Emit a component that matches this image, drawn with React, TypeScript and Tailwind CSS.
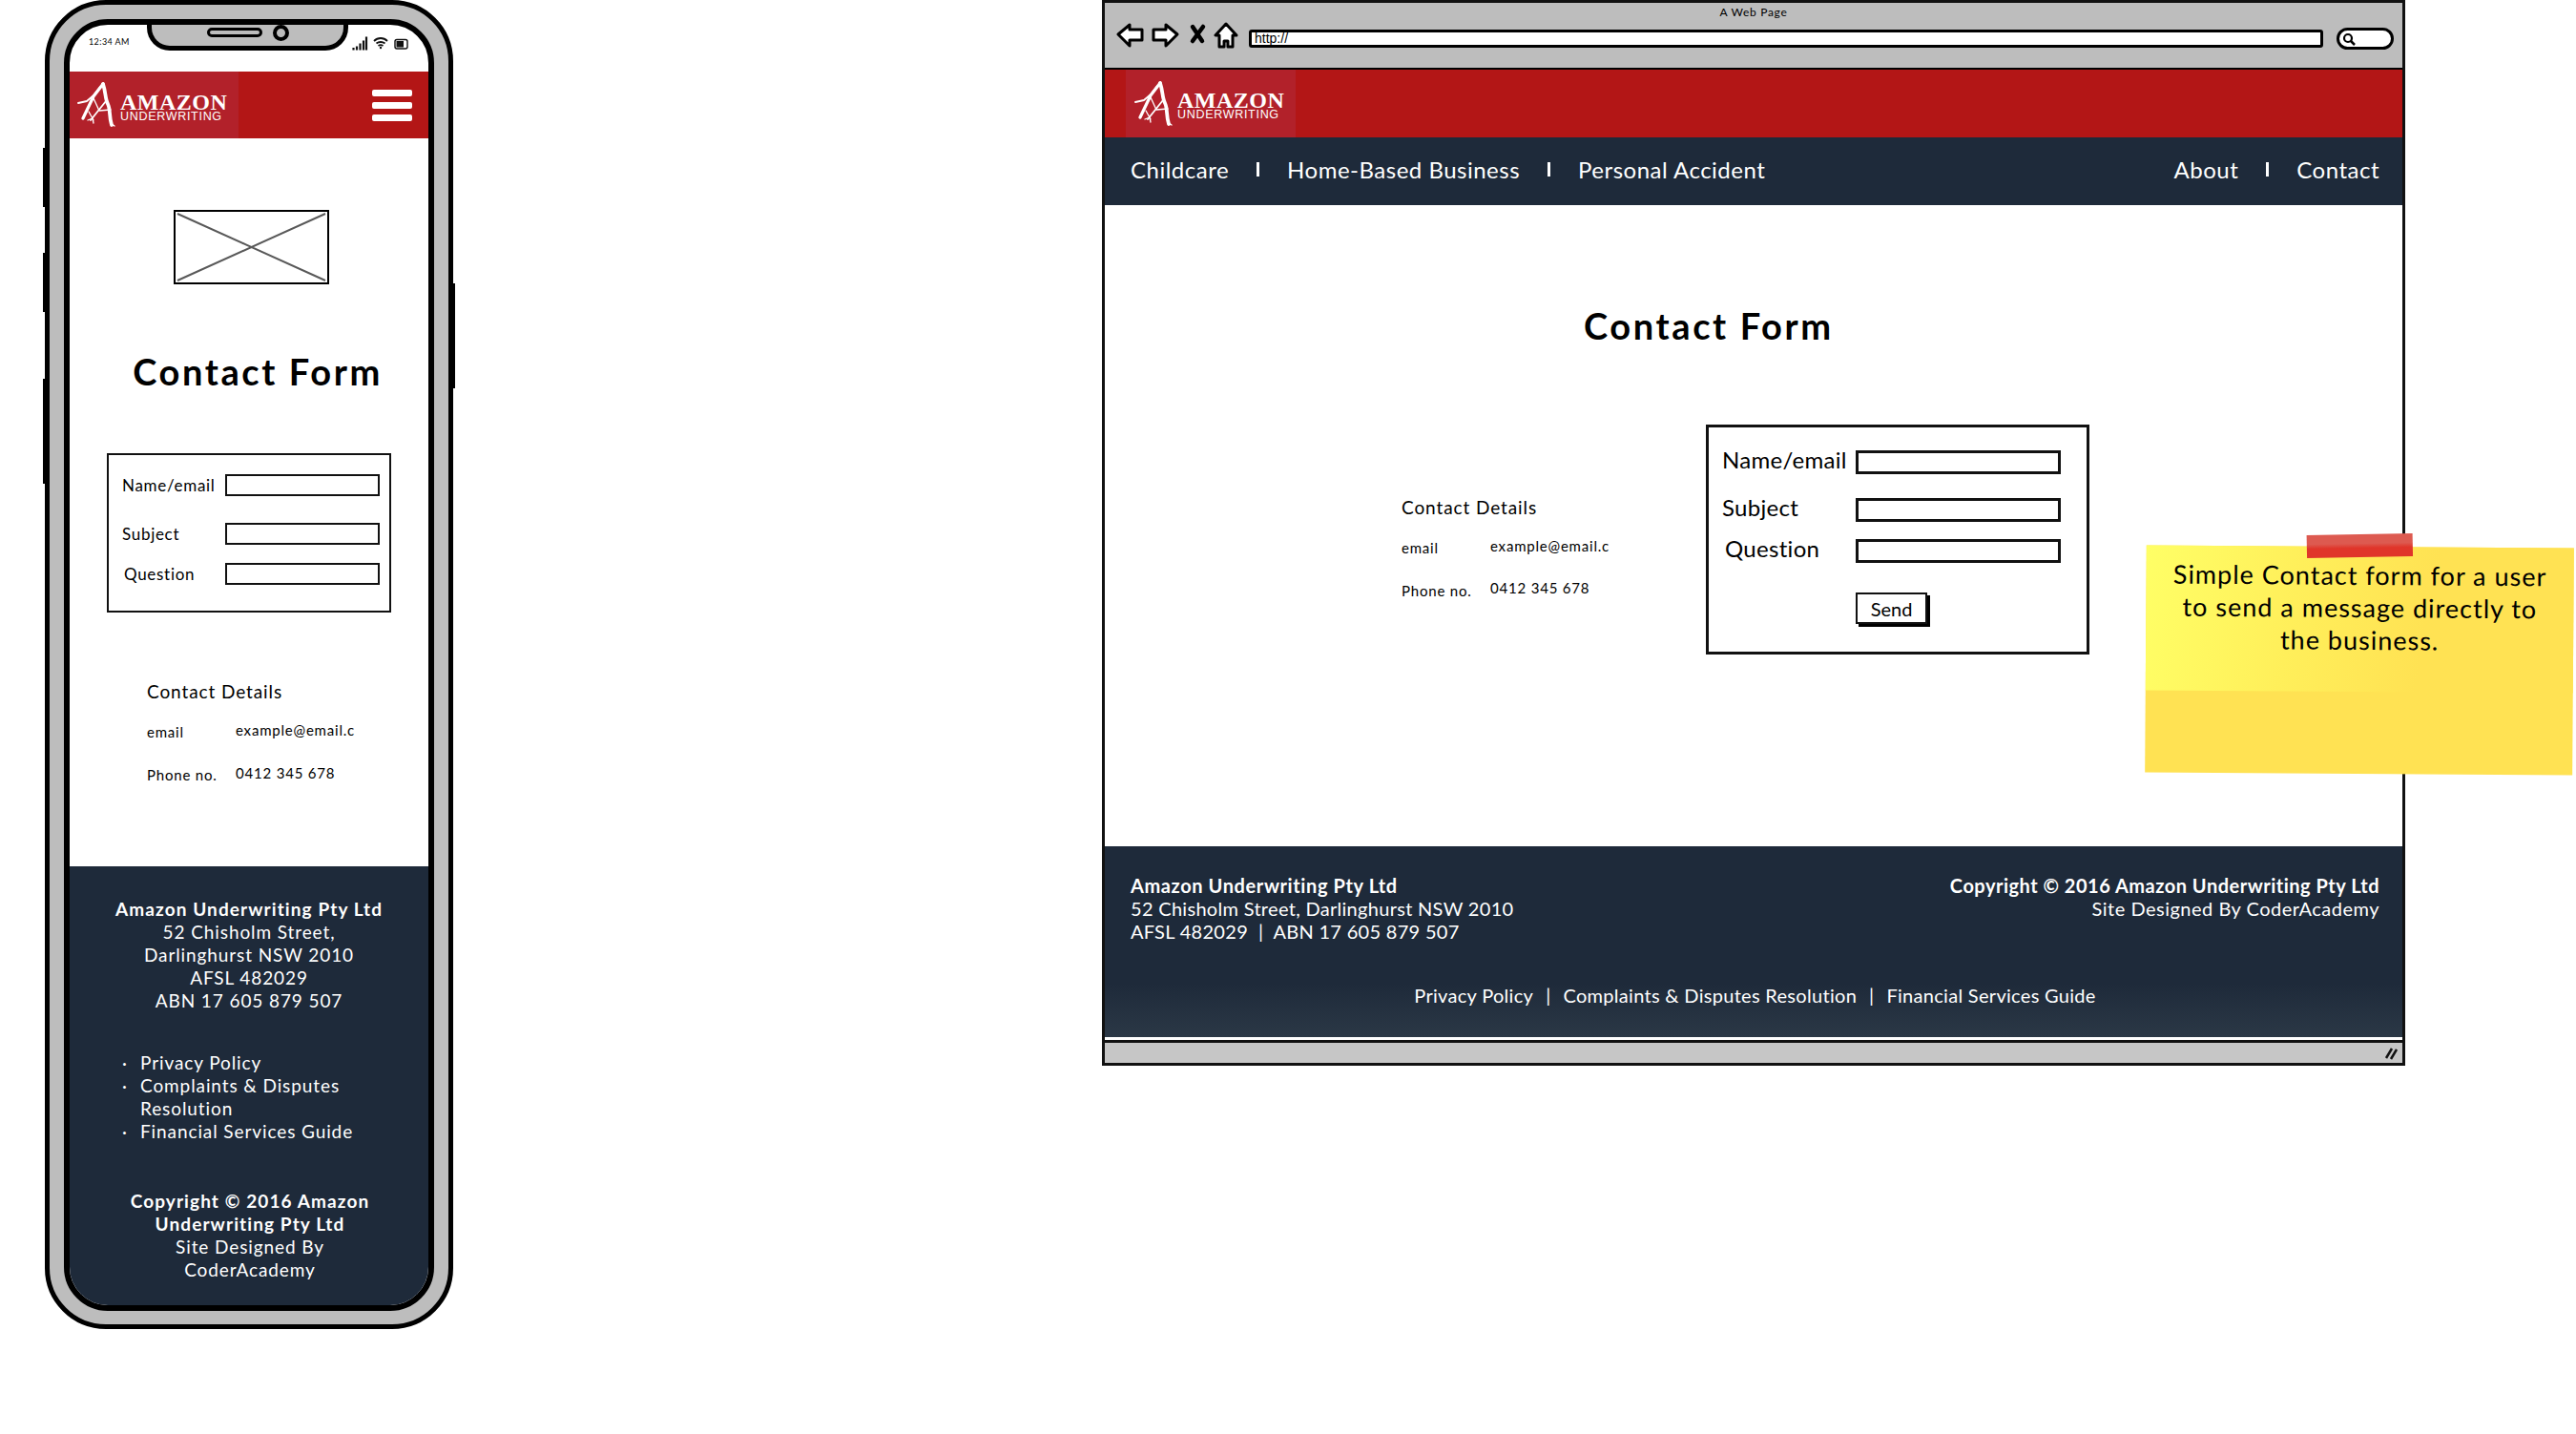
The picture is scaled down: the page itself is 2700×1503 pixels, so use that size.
import React from "react";

// Shared bits of the wireframe
function LogoMark({ className }: { className: string }) {
  return (
    <svg viewBox="6 7 42 48" className={className} fill="none" stroke="white" strokeLinecap="round" strokeLinejoin="round">
      <path d="M34 9L24 22L13 45" strokeWidth="3.2" />
      <path d="M34 9C37 18 36 24 39 30C42 36 40 42 43 52" strokeWidth="3.8" />
      <path d="M8 29L17 27L24 21L31 12" strokeWidth="1.8" />
      <path d="M37 27L21 47" strokeWidth="1.8" />
      <path d="M18 47L23 45L24 50M19 38L24 47M24 24L30 37L42 36M42 50L46 53" strokeWidth="1.3" />
    </svg>
  );
}

function Logo({ box, titleGap }: { box: string; titleGap: string }) {
  return (
    <div className={`${box} bg-[#b2212a] flex items-center h-full`}>
      <LogoMark className="w-[42px] h-[48px] shrink-0" />
      <div className={`${titleGap} flex flex-col text-white`}>
        <span className="text-[24px] tracking-[0.5px] font-bold [font-family:'Liberation_Serif',serif] leading-[18px]">AMAZON</span>
        <span className="mt-[1px] text-[12.5px] tracking-[0.7px] [font-family:'Liberation_Sans',sans-serif] leading-[10px]">UNDERWRITING</span>
      </div>
    </div>
  );
}

function Placeholder() {
  return (
    <svg viewBox="0 0 163 78" className="w-[163px] h-[78px] mt-[75px] ml-[109px] shrink-0">
      <rect x="1" y="1" width="161" height="76" fill="white" stroke="black" strokeWidth="2" />
      <path d="M4 4L159 74M159 4L4 74" stroke="#595959" strokeWidth="2" />
    </svg>
  );
}

function PhoneFormRow({ label, className, labelClass }: { label: string; className: string; labelClass?: string }) {
  return (
    <div className={`flex items-center h-[23px] ${className}`}>
      <span className={`w-[109px] text-[17px] tracking-[0.7px] text-black ${labelClass ?? ""}`}>{label}</span>
      <span className="w-[162px] h-[23px] border-2 border-[#111] bg-white" />
    </div>
  );
}

function DesktopFormRow({ label, className, labelClass }: { label: string; className: string; labelClass?: string }) {
  return (
    <div className={`flex items-center h-[25px] ${className}`}>
      <span className={`w-[140px] mb-[6px] text-[24px] tracking-[0.3px] text-black ${labelClass ?? ""}`}>{label}</span>
      <span className="w-[215px] h-[25px] border-[3px] border-[#111] bg-white" />
    </div>
  );
}

function ContactDetails({ valueGap, phoneClass }: { valueGap: string; phoneClass: string }) {
  return (
    <>
      <p className="text-[19px] leading-[24px] tracking-[0.9px]">Contact Details</p>
      <div className="mt-[20px] flex items-center h-[20px] text-[15px] tracking-[0.8px]">
        <span className={valueGap}>email</span>
        <span className="mb-[3px]">example@email.c</span>
      </div>
      <div className="mt-[25px] flex items-center h-[20px] text-[15px] tracking-[0.8px]">
        <span className={valueGap}>Phone no.</span>
        <span className={phoneClass}>0412 345 678</span>
      </div>
    </>
  );
}

function Phone() {
  return (
    <section className="absolute left-[47px] top-0 w-[428px] h-[1393px] rounded-[64px] border-[5px] border-black bg-[#bdbdbd] pt-[15px] px-[15px] pb-[14px]">
      {/* side buttons */}
      <span className="absolute -left-[7px] top-[150px] w-[3px] h-[62px] bg-black" />
      <span className="absolute -left-[7px] top-[260px] w-[3px] h-[62px] bg-black" />
      <span className="absolute -left-[7px] top-[392px] w-[3px] h-[110px] bg-black" />
      <span className="absolute -right-[7px] top-[292px] w-[3px] h-[110px] bg-black" />

      <div className="relative h-full rounded-[46px] border-[6px] border-black bg-white overflow-hidden flex flex-col">
        {/* status bar + notch */}
        <div className="relative h-[49px] shrink-0">
          <span className="absolute left-[20px] top-[12px] text-[9px] tracking-[0.4px] leading-[12px] text-black">12:34 AM</span>
          <div className="absolute left-[81px] -top-[6px] w-[211px] h-[33px] rounded-b-[24px] border-[5px] border-t-0 border-black bg-[#bdbdbd] flex items-center justify-center gap-[11px] pl-[1px]">
            <span className="w-[58px] h-[10px] rounded-full border-[3px] border-black bg-[#bdbdbd]" />
            <span className="w-[17px] h-[17px] rounded-full border-[4px] border-black" />
          </div>
          <svg viewBox="0 0 60 15" className="absolute left-[296px] top-[12px] w-[60px] h-[15px]">
            <path d="M1.5 14.5V12M5 14.5V10.5M8.5 14.5V7.5M12 14.5V4.5M15 14.5V0.5" stroke="#111" strokeWidth="2.2" />
            <path d="M23 5C27 1 33 1 37 5M25.5 7.5C28 5.5 32 5.5 34.5 7.5M27.5 10C29 9 31 9 32.5 10" stroke="#111" strokeWidth="1.8" fill="none" />
            <circle cx="30" cy="12" r="1.2" fill="#111" />
            <rect x="45" y="3.5" width="13" height="9.5" rx="2" fill="white" stroke="#111" strokeWidth="1.4" />
            <rect x="46.5" y="5" width="7.5" height="6.5" fill="#111" />
          </svg>
        </div>

        <header className="h-[70px] shrink-0 bg-[#b31616] flex items-center justify-between pr-[17px]">
          <Logo box="w-[177px] pl-[7px]" titleGap="ml-[4px] mt-[4px]" />
          <div className="flex flex-col gap-[6px]">
            <span className="w-[42px] h-[7px] rounded-[2px] bg-white" />
            <span className="w-[42px] h-[7px] rounded-[2px] bg-white" />
            <span className="w-[42px] h-[7px] rounded-[2px] bg-white" />
          </div>
        </header>

        <main className="h-[763px] shrink-0 flex flex-col text-black">
          <Placeholder />
          <h1 className="mt-[68px] h-[46px] leading-[46px] pl-[18px] text-center text-[38px] font-bold tracking-[2.6px]">Contact Form</h1>
          <div className="mt-[63px] ml-[39px] w-[298px] h-[167px] border-2 border-[#111] pt-[20px] pl-[13px]">
            <PhoneFormRow label="Name/email" className="" labelClass="pl-[1px]" />
            <PhoneFormRow label="Subject" className="mt-[28px]" labelClass="pl-[1px]" />
            <PhoneFormRow label="Question" className="mt-[19px]" labelClass="pl-[3px]" />
          </div>
          <div className="mt-[71px] ml-[81px]">
            <ContactDetails valueGap="w-[93px]" phoneClass="mb-[3px]" />
          </div>
        </main>

        <footer className="flex-1 bg-[#1e2a3a] pt-[33px] text-white text-[19px] leading-[24px] tracking-[0.9px]">
          <div className="text-center">
            <p className="font-bold tracking-[1.1px]">Amazon Underwriting Pty Ltd</p>
            <p>52 Chisholm Street,</p>
            <p>Darlinghurst NSW 2010</p>
            <p>AFSL 482029</p>
            <p>ABN 17 605 879 507</p>
          </div>
          <ul className="mt-[41px] pl-[74px] pr-[40px]">
            <li className="relative">Privacy Policy<span className="absolute -left-[19px] top-0">·</span></li>
            <li className="relative">Complaints &amp; Disputes Resolution<span className="absolute -left-[19px] top-0">·</span></li>
            <li className="relative">Financial Services Guide<span className="absolute -left-[19px] top-0">·</span></li>
          </ul>
          <div className="mt-[49px] text-center pl-[49px] pr-[47px]">
            <p className="font-bold tracking-[1.1px]">Copyright © 2016 Amazon Underwriting Pty Ltd</p>
            <p>Site Designed By CoderAcademy</p>
          </div>
        </footer>
      </div>
    </section>
  );
}

function NavIcons() {
  return (
    <svg viewBox="0 0 130 30" className="w-[130px] h-[30px] shrink-0 self-start">
      <path d="M2 13L14 3V8H27V19H14V25Z" fill="white" stroke="black" strokeWidth="3" strokeLinejoin="round" />
      <path d="M64 13L52 3V8H39V19H52V25Z" fill="white" stroke="black" strokeWidth="3" strokeLinejoin="round" />
      <path d="M80 5L90 20M91 5L80 20" stroke="black" strokeWidth="4.5" strokeLinecap="round" />
      <path d="M115 2L104 14H108V26H113V20H117V26H122V14H126Z" fill="white" stroke="black" strokeWidth="3" strokeLinejoin="round" />
    </svg>
  );
}

function NavDivider() {
  return <span className="w-[3px] h-[15px] bg-white" />;
}

function Browser() {
  return (
    <section className="absolute left-[1155px] top-0 w-[1366px] h-[1117px] border-[3px] border-[#111] bg-white flex flex-col">
      <div className="h-[70px] shrink-0 bg-[#bdbdbd] border-b-[2px] border-black">
        <p className="h-[18px] pt-[1px] text-center text-[12px] tracking-[0.7px] leading-[18px] text-black">A Web Page</p>
        <div className="mt-[2px] h-[30px] pl-[12px] flex items-center">
          <NavIcons />
          <div className="ml-[9px] mt-[5px] w-[1126px] h-[19px] border-[3px] border-black rounded-[3px] bg-white flex items-center pl-[3px] text-[14px] text-black [font-family:'Liberation_Sans',sans-serif]">http://</div>
          <div className="ml-[14px] mt-[5px] w-[60px] h-[23px] border-[3px] border-black rounded-full bg-white flex items-center pl-[3px]">
            <svg viewBox="0 0 14 14" className="w-[14px] h-[14px]">
              <circle cx="6" cy="6" r="4" fill="none" stroke="black" strokeWidth="2.2" />
              <path d="M9 9L13 13" stroke="black" strokeWidth="2.5" />
            </svg>
          </div>
        </div>
      </div>

      <div className="h-[71px] shrink-0 bg-[#b31616] pl-[22px]">
        <Logo box="w-[178px] pl-[8px]" titleGap="ml-[4px] mt-[4px]" />
      </div>

      <nav className="h-[71px] shrink-0 bg-[#1e2a3a] pl-[27px] pr-[24px] pb-[4px] flex items-center justify-between text-white text-[24px] tracking-[0.5px]">
        <div className="flex items-center gap-[29px]">
          <a>Childcare</a>
          <NavDivider />
          <a>Home-Based Business</a>
          <NavDivider />
          <a>Personal Accident</a>
        </div>
        <div className="flex items-center gap-[29px]">
          <a>About</a>
          <NavDivider />
          <a>Contact</a>
        </div>
      </nav>

      <main className="h-[672px] shrink-0 pt-[103px] text-black">
        <h1 className="ml-[502px] h-[46px] leading-[46px] text-[38px] font-bold tracking-[2.6px]">Contact Form</h1>
        <div className="mt-[81px] flex items-start">
          <div className="ml-[311px] w-[319px] mt-[75px]">
            <ContactDetails valueGap="w-[93px]" phoneClass="mb-[5px]" />
          </div>
          <form className="w-[402px] h-[241px] border-[3px] border-[#111] pt-[24px] pl-[14px]">
            <DesktopFormRow label="Name/email" className="" />
            <DesktopFormRow label="Subject" className="mt-[25px]" />
            <DesktopFormRow label="Question" className="mt-[18px]" labelClass="pl-[3px]" />
            <button type="button" className="ml-[140px] mt-[31px] w-[75px] h-[33px] border-2 border-[#111] bg-white text-[20px] leading-none shadow-[3px_3px_0_#000]">Send</button>
          </form>
        </div>
      </main>

      <footer className="h-[200px] shrink-0 bg-[linear-gradient(180deg,#1e2a3a_0%,#1e2a3a_72%,#2b3846_100%)] pl-[27px] pr-[24px] pt-[29px] text-white text-[20px] leading-[24px] tracking-[0.3px]">
        <div className="flex justify-between">
          <div>
            <p className="font-bold tracking-[0.6px]">Amazon Underwriting Pty Ltd</p>
            <p>52 Chisholm Street, Darlinghurst NSW 2010</p>
            <p>AFSL 482029 &nbsp;|&nbsp; ABN 17 605 879 507</p>
          </div>
          <div className="text-right">
            <p className="font-bold tracking-[0.5px]">Copyright © 2016 Amazon Underwriting Pty Ltd</p>
            <p className="tracking-[0.5px]">Site Designed By CoderAcademy</p>
          </div>
        </div>
        <div className="mt-[43px] flex justify-center gap-[13px]">
          <span>Privacy Policy</span>
          <span>|</span>
          <span>Complaints &amp; Disputes Resolution</span>
          <span>|</span>
          <span>Financial Services Guide</span>
        </div>
      </footer>

      <div className="mt-[3px] flex-1 border-t-[3px] border-[#111] bg-[#c6c6c6] flex items-center justify-end pr-[5px]">
        <svg viewBox="0 0 14 14" className="w-[14px] h-[14px]">
          <path d="M2 12L8 2M7 13L13 3" stroke="#111" strokeWidth="2.5" />
        </svg>
      </div>
    </section>
  );
}

function StickyNote() {
  return (
    <aside className="absolute left-[2249px] top-[573px] w-[448px] h-[238px] rotate-[0.4deg] bg-[#ffe253] text-center text-[27px] leading-[34px] tracking-[1px] text-black">
      <div className="absolute inset-x-0 top-0 h-[152px] bg-[linear-gradient(100deg,#ffff66_0%,#ffef5a_35%,#ffe253_65%)]" />
      <span className="absolute left-[168px] -top-[13px] w-[111px] h-[24px] -rotate-[1.5deg] bg-[linear-gradient(180deg,#dd5a50_0%,#dd5a50_40%,#e0352a_60%,#e0352a_100%)]" />
      <div className="relative pt-[13px]">
        <p>Simple Contact form for a user</p>
        <p>to send a message directly to</p>
        <p>the business.</p>
      </div>
    </aside>
  );
}

export default function App() {
  return (
    <div className="relative w-[2700px] h-[1503px] overflow-hidden bg-white [font-family:Lato,sans-serif]">
      <Phone />
      <Browser />
      <StickyNote />
    </div>
  );
}
